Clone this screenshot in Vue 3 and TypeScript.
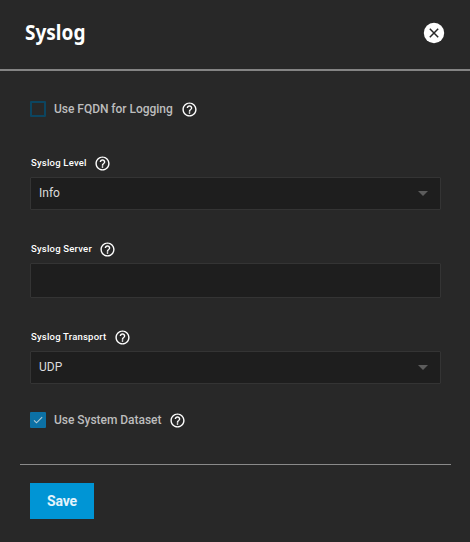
<script setup lang="ts">
import { ref } from 'vue'

interface Field {
  id: string
  label: string
  value: string
  select: boolean
}

const fields: Field[] = [
  { id: 'level', label: 'Syslog Level', value: 'Info', select: true },
  { id: 'server', label: 'Syslog Server', value: '', select: false },
  { id: 'transport', label: 'Syslog Transport', value: 'UDP', select: true },
]
const useFqdn = ref(false)
const useDataset = ref(true)
const helpPath =
  'M11 18h2v-2h-2v2zm1-16C6.48 2 2 6.48 2 12s4.48 10 10 10 10-4.48 10-10S17.52 2 12 2zm0 18c-4.41 0-8-3.59-8-8s3.59-8 8-8 8 3.59 8 8-3.59 8-8 8zm0-14c-2.21 0-4 1.79-4 4h2c0-1.1.9-2 2-2s2 .9 2 2c0 2-3 1.75-3 5h2c0-2.25 3-2.5 3-5 0-2.21-1.79-4-4-4z'
</script>

<template>
  <form class="panel" @submit.prevent>
    <header class="head">
      <h1 class="title">Syslog</h1>
      <button type="button" class="close">
        <svg viewBox="0 0 24 24">
          <circle cx="12" cy="12" r="10.2" />
          <path d="M7.8 7.8 16.2 16.2M16.2 7.8 7.8 16.2" />
        </svg>
      </button>
    </header>

    <div class="body">
      <div class="check-row" @click="useFqdn = !useFqdn">
        <span class="box" :class="{ on: useFqdn }">
          <svg v-if="useFqdn" viewBox="0 0 24 24"><path d="M4.1 12.7 9 17.6 20.3 6.3" /></svg>
        </span>
        <span class="check-label">Use FQDN for Logging</span>
        <svg class="help" viewBox="0 0 24 24"><path :d="helpPath" /></svg>
      </div>

      <div v-for="f in fields" :key="f.id" class="field" :class="f.id">
        <div class="label-row">
          <span class="label">{{ f.label }}</span>
          <svg class="help" viewBox="0 0 24 24"><path :d="helpPath" /></svg>
        </div>
        <div class="control">
          <span class="value">{{ f.value }}</span>
          <span v-if="f.select" class="arrow"></span>
        </div>
      </div>

      <div class="check-row dataset" @click="useDataset = !useDataset">
        <span class="box" :class="{ on: useDataset }">
          <svg v-if="useDataset" viewBox="0 0 24 24"><path d="M4.1 12.7 9 17.6 20.3 6.3" /></svg>
        </span>
        <span class="check-label">Use System Dataset</span>
        <svg class="help" viewBox="0 0 24 24"><path :d="helpPath" /></svg>
      </div>
    </div>

    <footer class="foot">
      <button type="submit" class="save">Save</button>
    </footer>
  </form>
</template>

<style>
body {
  background: #282828;
}
</style>

<style scoped>
.panel {
  box-sizing: border-box;
  height: 542px;
  background: #282828;
  color: #fff;
  font-family: Roboto, 'Liberation Sans', sans-serif;
}
.head {
  box-sizing: border-box;
  height: 71px;
  padding: 0 24px 4px 25px;
  border-bottom: 2px solid #848484;
  display: flex;
  align-items: center;
  justify-content: space-between;
}
.title {
  margin: 0;
  padding-bottom: 2px;
  font: 700 21px/32px 'Noto Sans', 'Open Sans', sans-serif;
  transform: scaleX(0.905);
  transform-origin: left center;
}
.close {
  padding: 0;
  border: 0;
  background: none;
  width: 24px;
  height: 24px;
}
.close svg {
  display: block;
  width: 24px;
  height: 24px;
}
.close circle {
  fill: #fff;
}
.close path {
  stroke: #282828;
  stroke-width: 1.5;
}
.body {
  padding: 30px 29px 0 30px;
}
.check-row {
  height: 16px;
  display: flex;
  align-items: center;
}
.box {
  box-sizing: border-box;
  width: 16px;
  height: 16px;
  border: 2px solid #0c4560;
  border-radius: 1px;
}
.box.on {
  border-color: #0c71a5;
  background: #0c71a5;
}
.box svg {
  display: block;
  width: 12px;
  height: 12px;
  fill: none;
  stroke: #b5cbd6;
  stroke-width: 2.2;
}
.check-label {
  margin-left: 8px;
  font-size: 12px;
  line-height: 16px;
  font-weight: 500;
  letter-spacing: -0.03px;
  color: #bdbdbd;
}
.help {
  width: 17px;
  height: 17px;
  margin-left: 7.5px;
  flex: none;
  fill: #fff;
}
.check-row .help {
  margin-left: 8px;
}
.field {
  padding-top: 38px;
}
.field.server,
.field.transport {
  padding-top: 31px;
}
.label-row {
  height: 17px;
  padding-left: 1px;
  display: flex;
  align-items: center;
}
.label {
  font-size: 9.5px;
  line-height: 14px;
  font-weight: 500;
  letter-spacing: 0.21px;
  padding-bottom: 1px;
}
.control {
  box-sizing: border-box;
  height: 33px;
  margin-top: 5px;
  padding: 0 12px 0 8px;
  border: 1px solid #343434;
  border-radius: 1px;
  background: #1e1e1e;
  display: flex;
  align-items: center;
  justify-content: space-between;
}
.server .control {
  height: 35px;
}
.value {
  font-size: 12px;
  line-height: 18px;
  padding-bottom: 2px;
  color: #dcdcdc;
}
.arrow {
  border: 5px solid transparent;
  border-top-color: #5c5c5c;
  border-bottom: 0;
}
.dataset {
  margin-top: 28px;
}
.foot {
  margin: 36px 19px 0 20px;
  padding: 18px 10px 0;
  border-top: 1px solid #8a8a8a;
}
.save {
  display: block;
  width: 64px;
  height: 36px;
  padding: 0;
  border: 0;
  background: #0095d5;
  color: #e4f3fb;
  font: 700 14px/36px Roboto, 'Liberation Sans', sans-serif;
  letter-spacing: -0.1px;
}
</style>
